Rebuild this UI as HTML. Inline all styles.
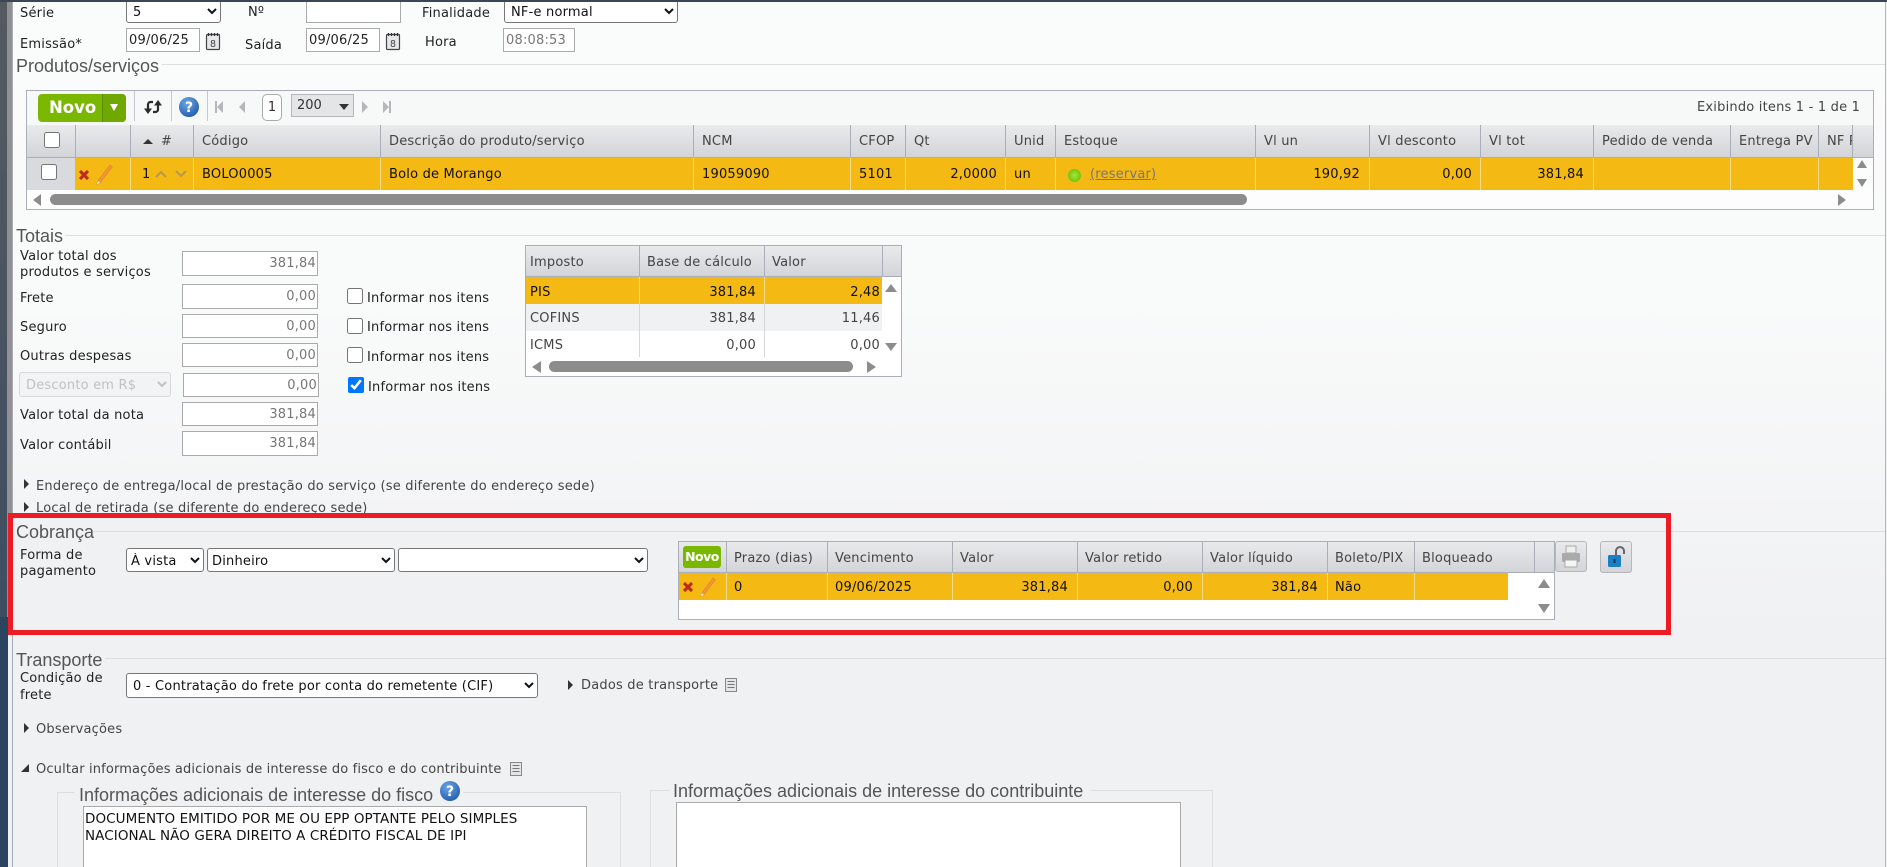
<!DOCTYPE html>
<html><head><meta charset="utf-8"><style>
html{margin:0;padding:0;width:1887px;height:867px;overflow:hidden}
body{margin:0;padding:0;width:1887px;height:867px;overflow:hidden;position:relative;background:#f0f1f3;font:13px/16px "DejaVu Sans","Liberation Sans",sans-serif;color:#222}
#w{left:0;top:0;width:1887px;height:867px;overflow:hidden}
div,span,input,select,svg,textarea{position:absolute;box-sizing:border-box}
.t{white-space:nowrap;font-size:13px;letter-spacing:.2px;line-height:16px;color:#222;margin-top:1px}
.g{color:#444}
.lg{white-space:nowrap;font-family:"Liberation Sans",sans-serif;font-size:18px;line-height:20px;color:#555}
.ln{height:1px;background:#dcdee0}
select{font:13px "DejaVu Sans",sans-serif;letter-spacing:.2px;color:#111;background:#fff;border:1px solid #777;border-radius:3px;padding:2px 0 0 0;margin:0}
.i{background:#fff;border:1px solid #aaa;font:13px/24px "DejaVu Sans",sans-serif;letter-spacing:.2px;color:#777;text-align:right;padding:0 1px;white-space:nowrap}
.h{background:linear-gradient(#e9eaec,#d2d4d8);border-right:1px solid #a9aeb9;border-bottom:1px solid #a9aeb9;font-size:13px;letter-spacing:.2px;line-height:34px;color:#444;padding-left:7px;white-space:nowrap;overflow:hidden}
.c{background:#f5b914;border-right:1px solid #f8dc8a;font-size:13px;letter-spacing:.2px;line-height:34px;color:#111;padding:0 8px;white-space:nowrap;overflow:hidden}
.r{text-align:right}
.bar{background:#8c8c8c;border-radius:6px}
.tri{width:0;height:0;border-style:solid;border-color:transparent}
input[type=checkbox]{margin:0;width:16px;height:16px}
</style></head><body><div id="w">
<!-- page background -->
<div style="left:13px;top:2px;width:1872px;height:630px;background:linear-gradient(#fafbfb 0,#f9fafa 300px,#f0f1f3 630px)"></div>
<div style="left:0;top:0;width:8px;height:617px;background:linear-gradient(#555a60,#3e4e62)"></div>
<div style="left:7px;top:0;width:5px;height:617px;background:#8f9194"></div>
<div style="left:0;top:617px;width:8px;height:250px;background:#2b4560"></div>
<div style="left:12px;top:0;width:1px;height:867px;background:#a9abb0"></div>
<div style="left:1885px;top:2px;width:1px;height:865px;background:#b5b7ba"></div>

<!-- top form -->
<div class="t" style="left:20px;top:5px">Série</div>
<select style="left:126px;top:0;width:95px;height:23px;padding-left:2px"><option>5</option></select>
<div class="t" style="left:248px;top:4px">Nº</div>
<div class="i" style="left:306px;top:0;width:95px;height:23px"></div>
<div class="t" style="left:422px;top:5px">Finalidade</div>
<select style="left:504px;top:0;width:174px;height:23px;padding-left:2px"><option>NF-e normal</option></select>
<div class="t" style="left:20px;top:36px">Emissão*</div>
<div class="i" style="left:126px;top:28px;width:74px;height:24px;text-align:left;color:#222;padding-left:2px">09/06/25</div>
<svg style="left:205px;top:32px" width="17" height="19" viewBox="0 0 17 19"><rect x="1.500" y="2.500" width="13" height="15" rx="1" fill="#e6e7e8" stroke="#444" stroke-width="1.200"/><path d="M3.500 1v3M6.500 1v3M9.500 1v3M12.500 1v3" stroke="#333" stroke-width="1.300"/><text x="8" y="15" font-size="9.500" font-family="DejaVu Sans" text-anchor="middle" fill="#444">8</text></svg>
<div class="t" style="left:245px;top:37px">Saída</div>
<div class="i" style="left:306px;top:28px;width:74px;height:24px;text-align:left;color:#222;padding-left:2px">09/06/25</div>
<svg style="left:385px;top:32px" width="17" height="19" viewBox="0 0 17 19"><rect x="1.500" y="2.500" width="13" height="15" rx="1" fill="#e6e7e8" stroke="#444" stroke-width="1.200"/><path d="M3.500 1v3M6.500 1v3M9.500 1v3M12.500 1v3" stroke="#333" stroke-width="1.300"/><text x="8" y="15" font-size="9.500" font-family="DejaVu Sans" text-anchor="middle" fill="#444">8</text></svg>
<div class="t" style="left:425px;top:34px">Hora</div>
<div class="i" style="left:503px;top:28px;width:72px;height:24px;text-align:left;color:#777;padding-left:2px">08:08:53</div>

<!-- Produtos -->
<div class="lg" style="left:16px;top:56px">Produtos/serviços</div>
<div class="ln" style="left:162px;top:64px;width:1723px"></div>
<div style="left:26px;top:90px;width:1848px;height:120px;border:1px solid #a9aeb9;background:#fbfcfc"></div>
<div style="left:27px;top:91px;width:1846px;height:34px;background:#f7f8f8"></div>
<div style="left:38px;top:94px;width:88px;height:28px;background:#7ab800;border-radius:4px"></div>
<div style="left:102px;top:94px;width:24px;height:28px;background:#6fa800;border-left:1px solid #5c8c00;border-radius:0 4px 4px 0"></div>
<div style="left:49px;top:99px;font:bold 16.500px/18px 'DejaVu Sans',sans-serif;color:#fff;white-space:nowrap">Novo</div>
<div class="tri" style="left:110px;top:104px;border-width:7px 4px 0;border-top-color:#fff"></div>
<div style="left:134px;top:91px;width:1px;height:30px;background:#c5c8cc"></div>
<div style="left:171px;top:91px;width:1px;height:30px;background:#c5c8cc"></div>
<div style="left:207px;top:91px;width:1px;height:30px;background:#c5c8cc"></div>
<svg style="left:144px;top:99px" width="18" height="16" viewBox="0 0 18 16"><path d="M9 3H6.500A2.500 2.500 0 0 0 4 5.500V10M9 13h2.500A2.500 2.500 0 0 0 14 10.500V6" fill="none" stroke="#2b2b2b" stroke-width="2.200"/><path d="M0 9.500h8L4 15zM10 6.500h8L14 1z" fill="#2b2b2b"/></svg>
<svg style="left:179px;top:97px" width="20" height="20" viewBox="0 0 20 20"><defs><radialGradient id="q" cx=".4" cy=".3" r=".8"><stop offset="0" stop-color="#6ea6e6"/><stop offset="1" stop-color="#1c57a8"/></radialGradient></defs><circle cx="10" cy="10" r="10" fill="url(#q)"/><text x="10" y="15" text-anchor="middle" font-family="DejaVu Sans" font-weight="bold" font-size="14" fill="#fff">?</text></svg>
<div style="left:215px;top:101px;width:2px;height:12px;background:#b5b7ba"></div>
<div class="tri" style="left:217px;top:101px;border-width:6px 6px 6px 0;border-right-color:#b5b7ba"></div>
<div class="tri" style="left:239px;top:101px;border-width:6px 6px 6px 0;border-right-color:#b5b7ba"></div>
<div style="left:262px;top:94px;width:20px;height:27px;background:#fff;border:1px solid #aaa;border-radius:5px;text-align:center;font-size:13px;line-height:26px;color:#333">1</div>
<div style="left:291px;top:94px;width:63px;height:23px;background:#e4e5e7;border:1px solid #b5b7ba;font-size:13px;line-height:21px;padding-left:5px;color:#333">200</div>
<div class="tri" style="left:339px;top:104px;border-width:6px 5px 0;border-top-color:#333"></div>
<div class="tri" style="left:362px;top:101px;border-width:6px 0 6px 6px;border-left-color:#b5b7ba"></div>
<div class="tri" style="left:383px;top:101px;border-width:6px 0 6px 6px;border-left-color:#b5b7ba"></div>
<div style="left:389px;top:101px;width:2px;height:12px;background:#b5b7ba"></div>
<div class="t g" style="left:1697px;top:99px">Exibindo itens 1 - 1 de 1</div>

<!-- product header -->
<div class="h" style="left:27px;top:125px;width:49px;height:33px"></div>
<input type="checkbox" style="left:44px;top:132px">
<div class="h" style="left:76px;top:125px;width:55px;height:33px"></div>
<div class="h" style="left:131px;top:125px;width:63px;height:33px;padding-left:30px">#</div>
<div class="tri" style="left:143px;top:139px;border-width:0 5px 5px;border-bottom-color:#333"></div>
<div class="h" style="left:194px;top:125px;width:187px;height:33px;padding-left:8px">Código</div>
<div class="h" style="left:381px;top:125px;width:313px;height:33px;padding-left:8px">Descrição do produto/serviço</div>
<div class="h" style="left:694px;top:125px;width:157px;height:33px;padding-left:8px">NCM</div>
<div class="h" style="left:851px;top:125px;width:55px;height:33px;padding-left:8px">CFOP</div>
<div class="h" style="left:906px;top:125px;width:100px;height:33px;padding-left:8px">Qt</div>
<div class="h" style="left:1006px;top:125px;width:50px;height:33px;padding-left:8px">Unid</div>
<div class="h" style="left:1056px;top:125px;width:200px;height:33px;padding-left:8px">Estoque</div>
<div class="h" style="left:1256px;top:125px;width:114px;height:33px;padding-left:8px">Vl un</div>
<div class="h" style="left:1370px;top:125px;width:111px;height:33px;padding-left:8px">Vl desconto</div>
<div class="h" style="left:1481px;top:125px;width:113px;height:33px;padding-left:8px">Vl tot</div>
<div class="h" style="left:1594px;top:125px;width:137px;height:33px;padding-left:8px">Pedido de venda</div>
<div class="h" style="left:1731px;top:125px;width:88px;height:33px;padding-left:8px">Entrega PV</div>
<div class="h" style="left:1819px;top:125px;width:34px;height:33px;padding-left:8px">NF P</div>
<div class="h" style="left:1853px;top:125px;width:20px;height:33px;border-right:0"></div>
<!-- product row -->
<div style="left:27px;top:158px;width:48px;height:32px;background:#d8dadd"></div>
<input type="checkbox" style="left:41px;top:164px">
<div class="c" style="left:75px;top:158px;width:56px;height:32px"></div>
<svg style="left:79px;top:170px" width="10" height="10" viewBox="0 0 10 10"><path d="M1 1l8 8M9 1l-8 8" stroke="#c0281c" stroke-width="3"/></svg>
<svg style="left:95px;top:163px" width="19" height="22" viewBox="0 0 19 22"><path d="M15 2L3 18l-1 3 3-1L17 4z" fill="#f09a3a" stroke="#e8882a"/><path d="M3 18l-1 3 3-1z" fill="#fff"/></svg>
<div class="c" style="left:131px;top:158px;width:63px;height:32px;padding-left:11px">1</div>
<svg style="left:155px;top:170px" width="32" height="8" viewBox="0 0 32 8"><path d="M1 7l5-5 5 5M21 1l5 5 5-5" fill="none" stroke="#b59a4a" stroke-width="2"/></svg>
<div class="c" style="left:194px;top:158px;width:187px;height:32px">BOLO0005</div>
<div class="c" style="left:381px;top:158px;width:313px;height:32px">Bolo de Morango</div>
<div class="c" style="left:694px;top:158px;width:157px;height:32px">19059090</div>
<div class="c" style="left:851px;top:158px;width:55px;height:32px">5101</div>
<div class="c r" style="left:906px;top:158px;width:100px;height:32px">2,0000</div>
<div class="c" style="left:1006px;top:158px;width:50px;height:32px">un</div>
<div class="c" style="left:1056px;top:158px;width:200px;height:32px;padding-left:34px;color:#777"><u>(reservar)</u></div>
<div style="left:1068px;top:169px;width:13px;height:13px;border-radius:50%;background:radial-gradient(#a6e635,#5cb800)"></div>
<div class="c r" style="left:1256px;top:158px;width:114px;height:32px;padding-right:9px">190,92</div>
<div class="c r" style="left:1370px;top:158px;width:111px;height:32px">0,00</div>
<div class="c r" style="left:1481px;top:158px;width:113px;height:32px;padding-right:9px">381,84</div>
<div class="c" style="left:1594px;top:158px;width:137px;height:32px"></div>
<div class="c" style="left:1731px;top:158px;width:88px;height:32px"></div>
<div class="c" style="left:1819px;top:158px;width:34px;height:32px;border-right:0"></div>
<div class="tri" style="left:1857px;top:160px;border-width:0 5.500px 8px;border-bottom-color:#8c8c8c"></div>
<div class="tri" style="left:1857px;top:179px;border-width:8px 5.500px 0;border-top-color:#8c8c8c"></div>
<div style="left:27px;top:190px;width:1846px;height:19px;background:#fdfdfd"></div>
<div class="tri" style="left:33px;top:194px;border-width:6px 8px 6px 0;border-right-color:#8c8c8c"></div>
<div class="bar" style="left:50px;top:194px;width:1197px;height:11px"></div>
<div class="tri" style="left:1838px;top:194px;border-width:6px 0 6px 8px;border-left-color:#8c8c8c"></div>

<!-- Totais -->
<div class="lg" style="left:16px;top:226px">Totais</div>
<div class="ln" style="left:65px;top:235px;width:1820px"></div>
<div class="t" style="left:20px;top:248px">Valor total dos</div>
<div class="t" style="left:20px;top:264px">produtos e serviços</div>
<div class="i" style="left:182px;top:251px;width:136px;height:25px">381,84</div>
<div class="t" style="left:20px;top:290px">Frete</div>
<div class="i" style="left:182px;top:284px;width:136px;height:25px;line-height:23px">0,00</div>
<div class="t" style="left:20px;top:319px">Seguro</div>
<div class="i" style="left:182px;top:314px;width:136px;height:24px;line-height:23px">0,00</div>
<div class="t" style="left:20px;top:348px">Outras despesas</div>
<div class="i" style="left:182px;top:343px;width:136px;height:24px">0,00</div>
<select disabled style="left:19px;top:372px;width:152px;height:25px;border-color:#ccc;color:#aaa;background:#f1f2f3;padding-left:2px"><option>Desconto em R$</option></select>
<div class="i" style="left:183px;top:373px;width:136px;height:24px">0,00</div>
<div class="t" style="left:20px;top:407px">Valor total da nota</div>
<div class="i" style="left:182px;top:402px;width:136px;height:24px">381,84</div>
<div class="t" style="left:20px;top:437px">Valor contábil</div>
<div class="i" style="left:182px;top:431px;width:136px;height:25px">381,84</div>
<input type="checkbox" style="left:347px;top:288px"><div class="t" style="left:367px;top:290px">Informar nos itens</div>
<input type="checkbox" style="left:347px;top:318px"><div class="t" style="left:367px;top:319px">Informar nos itens</div>
<input type="checkbox" style="left:347px;top:347px"><div class="t" style="left:367px;top:349px">Informar nos itens</div>
<input type="checkbox" checked style="left:348px;top:377px"><div class="t" style="left:368px;top:379px">Informar nos itens</div>

<!-- tax grid -->
<div style="left:525px;top:245px;width:377px;height:132px;border:1px solid #a9aeb9;background:#fff"></div>
<div class="h" style="left:526px;top:246px;width:114px;height:31px;padding-left:4px">Imposto</div>
<div class="h" style="left:640px;top:246px;width:125px;height:31px">Base de cálculo</div>
<div class="h" style="left:765px;top:246px;width:118px;height:31px">Valor</div>
<div class="h" style="left:883px;top:246px;width:18px;height:31px;border-right:0"></div>
<div class="c" style="left:526px;top:277px;width:114px;height:27px;padding-left:4px;line-height:31px">PIS</div>
<div class="c r" style="left:640px;top:277px;width:125px;height:27px;line-height:31px;padding-right:8px">381,84</div>
<div class="c r" style="left:765px;top:277px;width:117px;height:27px;line-height:31px;padding-right:2px;border-right:0">2,48</div>
<div class="c g" style="left:526px;top:304px;width:114px;height:27px;padding-left:4px;line-height:29px;background:#f0f1f3;border-color:#d5d6da;color:#444">COFINS</div>
<div class="c r" style="left:640px;top:304px;width:125px;height:27px;line-height:29px;padding-right:8px;background:#f0f1f3;border-color:#d5d6da;color:#444">381,84</div>
<div class="c r" style="left:765px;top:304px;width:117px;height:27px;line-height:29px;padding-right:2px;background:#f0f1f3;border:0;color:#444">11,46</div>
<div class="c" style="left:526px;top:331px;width:114px;height:26px;padding-left:4px;line-height:29px;background:#fff;border-color:#d5d6da;color:#444">ICMS</div>
<div class="c r" style="left:640px;top:331px;width:125px;height:26px;line-height:29px;padding-right:8px;background:#fff;border-color:#d5d6da;color:#444">0,00</div>
<div class="c r" style="left:765px;top:331px;width:117px;height:26px;line-height:29px;padding-right:2px;background:#fff;border:0;color:#444">0,00</div>
<div class="tri" style="left:885px;top:284px;border-width:0 6.500px 8px;border-bottom-color:#8c8c8c"></div>
<div class="tri" style="left:885px;top:343px;border-width:8px 6.500px 0;border-top-color:#8c8c8c"></div>
<div class="tri" style="left:532px;top:361px;border-width:6px 9px 6px 0;border-right-color:#8c8c8c"></div>
<div class="bar" style="left:549px;top:361px;width:304px;height:11px"></div>
<div class="tri" style="left:867px;top:361px;border-width:6px 0 6px 9px;border-left-color:#8c8c8c"></div>

<div class="tri" style="left:24px;top:479px;border-width:5.500px 0 5.500px 5.500px;border-left-color:#333"></div>
<div class="t" style="left:36px;top:478px;color:#444">Endereço de entrega/local de prestação do serviço (se diferente do endereço sede)</div>
<div class="tri" style="left:24px;top:502px;border-width:5.500px 0 5.500px 5.500px;border-left-color:#333"></div>
<div class="t" style="left:36px;top:500px;color:#444">Local de retirada (se diferente do endereço sede)</div>

<!-- Cobrança background + red frame -->
<div style="left:8px;top:513px;width:1663px;height:122px;border:5px solid #ed1c24;background:#f0f1f3"></div>
<div class="ln" style="left:1671px;top:531px;width:214px"></div>
<div class="lg" style="left:16px;top:522px">Cobrança</div>
<div class="ln" style="left:93px;top:531px;width:1573px"></div>
<div class="t" style="left:20px;top:547px">Forma de</div>
<div class="t" style="left:20px;top:563px">pagamento</div>
<select style="left:126px;top:548px;width:78px;height:24px"><option>À vista</option></select>
<select style="left:207px;top:548px;width:188px;height:24px"><option>Dinheiro</option></select>
<select style="left:398px;top:548px;width:250px;height:24px"><option></option></select>

<!-- cobranca grid -->
<div style="left:678px;top:541px;width:877px;height:79px;border:1px solid #a9aeb9;background:#fff"></div>
<div class="h" style="left:679px;top:542px;width:48px;height:31px"></div>
<div style="left:683px;top:546px;width:38px;height:22px;background:#7ab800;border-radius:3px;color:#fff;font:bold 12.500px/22px 'DejaVu Sans',sans-serif;text-align:center;letter-spacing:-.5px">Novo</div>
<div class="h" style="left:727px;top:542px;width:101px;height:31px">Prazo (dias)</div>
<div class="h" style="left:828px;top:542px;width:125px;height:31px">Vencimento</div>
<div class="h" style="left:953px;top:542px;width:125px;height:31px">Valor</div>
<div class="h" style="left:1078px;top:542px;width:125px;height:31px">Valor retido</div>
<div class="h" style="left:1203px;top:542px;width:125px;height:31px">Valor líquido</div>
<div class="h" style="left:1328px;top:542px;width:87px;height:31px">Boleto/PIX</div>
<div class="h" style="left:1415px;top:542px;width:120px;height:31px">Bloqueado</div>
<div class="h" style="left:1535px;top:542px;width:19px;height:31px;border-right:0"></div>
<div class="c" style="left:679px;top:573px;width:48px;height:27px"></div>
<svg style="left:683px;top:582px" width="10" height="10" viewBox="0 0 10 10"><path d="M1 1l8 8M9 1l-8 8" stroke="#c0281c" stroke-width="3"/></svg>
<svg style="left:699px;top:576px" width="18" height="21" viewBox="0 0 19 22"><path d="M15 2L3 18l-1 3 3-1L17 4z" fill="#f09a3a" stroke="#e8882a"/><path d="M3 18l-1 3 3-1z" fill="#fff"/></svg>
<div class="c" style="left:727px;top:573px;width:101px;height:27px;line-height:29px;padding-left:7px">0</div>
<div class="c" style="left:828px;top:573px;width:125px;height:27px;line-height:29px;padding-left:7px">09/06/2025</div>
<div class="c r" style="left:953px;top:573px;width:125px;height:27px;line-height:29px;padding-right:9px">381,84</div>
<div class="c r" style="left:1078px;top:573px;width:125px;height:27px;line-height:29px;padding-right:9px">0,00</div>
<div class="c r" style="left:1203px;top:573px;width:125px;height:27px;line-height:29px;padding-right:9px">381,84</div>
<div class="c" style="left:1328px;top:573px;width:87px;height:27px;line-height:29px;padding-left:7px">Não</div>
<div class="c" style="left:1415px;top:573px;width:93px;height:27px;border-right:0"></div>
<div class="tri" style="left:1538px;top:579px;border-width:0 6px 9px;border-bottom-color:#8c8c8c"></div>
<div class="tri" style="left:1538px;top:604px;border-width:9px 6px 0;border-top-color:#8c8c8c"></div>
<div style="left:1555px;top:541px;width:32px;height:31px;background:linear-gradient(#e9eaec,#d2d4d8);border:1px solid #b5b7ba;border-radius:3px"></div>
<svg style="left:1560px;top:545px" width="22" height="23" viewBox="0 0 22 23"><rect x="6" y="1" width="10" height="7" fill="#eee" stroke="#aaa"/><rect x="2" y="8" width="18" height="9" rx="1" fill="#a8aaac"/><rect x="5" y="15" width="12" height="7" fill="#f4f4f4" stroke="#aaa"/></svg>
<div style="left:1600px;top:541px;width:32px;height:32px;background:linear-gradient(#e9eaec,#d2d4d8);border:1px solid #b5b7ba;border-radius:3px"></div>
<svg style="left:1605px;top:545px" width="23" height="23" viewBox="0 0 23 23"><path d="M11 11V6a4 4 0 0 1 8 0v3" fill="none" stroke="#666" stroke-width="2"/><rect x="3" y="10" width="13" height="12" rx="1.500" fill="#1c7fc4"/><rect x="8.500" y="14" width="2" height="4" fill="#0b3d66"/></svg>

<!-- Transporte -->
<div class="lg" style="left:16px;top:650px">Transporte</div>
<div class="ln" style="left:105px;top:658px;width:1780px"></div>
<div class="t" style="left:20px;top:670px">Condição de</div>
<div class="t" style="left:20px;top:687px">frete</div>
<select style="left:126px;top:673px;width:412px;height:25px;padding-left:2px"><option>0 - Contratação do frete por conta do remetente (CIF)</option></select>
<div class="tri" style="left:568px;top:680px;border-width:5.500px 0 5.500px 5.500px;border-left-color:#333"></div>
<div class="t g" style="left:581px;top:677px">Dados de transporte</div>
<svg style="left:725px;top:678px" width="12" height="14" viewBox="0 0 12 14"><rect x=".5" y=".5" width="11" height="13" fill="#e4e5e7" stroke="#888"/><path d="M2.500 3.500h7M2.500 6.500h7M2.500 9.500h7" stroke="#777"/></svg>
<div class="tri" style="left:24px;top:723px;border-width:5.500px 0 5.500px 5.500px;border-left-color:#333"></div>
<div class="t g" style="left:36px;top:721px">Observações</div>
<div class="tri" style="left:21px;top:764px;border-width:0 0 8px 8px;border-bottom-color:#333"></div>
<div class="t g" style="left:36px;top:761px;letter-spacing:.15px">Ocultar informações adicionais de interesse do fisco e do contribuinte</div>
<svg style="left:510px;top:762px" width="12" height="14" viewBox="0 0 12 14"><rect x=".5" y=".5" width="11" height="13" fill="#e4e5e7" stroke="#888"/><path d="M2.500 3.500h7M2.500 6.500h7M2.500 9.500h7" stroke="#777"/></svg>

<!-- Fieldsets -->
<div style="left:57px;top:792px;width:564px;height:75px;border:1px solid #dcdee0;border-bottom:0"></div>
<div style="left:75px;top:782px;width:388px;height:20px;background:#f0f1f3"></div>
<div class="lg" style="left:79px;top:785px">Informações adicionais de interesse do fisco</div>
<svg style="left:440px;top:781px" width="20" height="20" viewBox="0 0 20 20"><circle cx="10" cy="10" r="10" fill="url(#q)"/><text x="10" y="15" text-anchor="middle" font-family="DejaVu Sans" font-weight="bold" font-size="14" fill="#fff">?</text></svg>
<div style="left:83px;top:806px;width:504px;height:61px;background:#fff;border:1px solid #aaa;border-bottom:0"></div>
<div class="t" style="left:85px;top:810px;color:#111;font-size:13.500px;letter-spacing:.08px">DOCUMENTO EMITIDO POR ME OU EPP OPTANTE PELO SIMPLES</div>
<div class="t" style="left:85px;top:827px;color:#111;font-size:13.500px;letter-spacing:.08px">NACIONAL NÃO GERA DIREITO A CRÉDITO FISCAL DE IPI</div>
<div style="left:650px;top:790px;width:563px;height:77px;border:1px solid #dcdee0;border-bottom:0"></div>
<div style="left:669px;top:782px;width:421px;height:20px;background:#f0f1f3"></div>
<div class="lg" style="left:673px;top:781px">Informações adicionais de interesse do contribuinte</div>
<div style="left:676px;top:802px;width:505px;height:65px;background:#fff;border:1px solid #aaa;border-bottom:0"></div>
<div style="left:0;top:0;width:1887px;height:2px;background:#3b4656"></div>
</div></body></html>
